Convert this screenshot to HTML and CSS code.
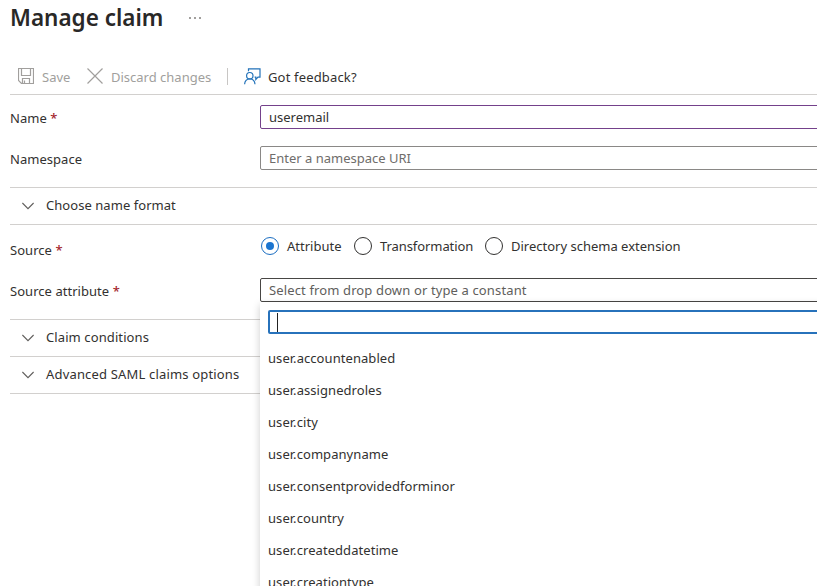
FILE: index.html
```html
<!DOCTYPE html>
<html lang="en">
<head>
<meta charset="utf-8">
<title>Manage claim</title>
<link rel="stylesheet" href="styles.css">
</head>
<body>
<main class="page">
  <header class="header">
    <h1 class="title">Manage claim</h1>
    <span class="more"><i></i><i></i><i></i></span>
  </header>
  <nav class="toolbar">
    <svg class="icon save" width="16" height="16" viewBox="0 0 16 16"><path d="M.5 .5h15v15h-12l-3-3zM3.500 .5v7h9v-7M4.500 15v-4.500h7V15M6.500 12.500V15"/></svg>
    <span class="command save-text">Save</span>
    <svg class="icon discard" width="18" height="18" viewBox="0 0 18 18"><path d="M1.500 1.500l15 15M16.500 1.500l-15 15"/></svg>
    <span class="command discard-text">Discard changes</span>
    <span class="separator"></span>
    <svg class="icon feedback" width="17" height="17" viewBox="0 0 17 17"><path d="M4.500 3.200V.8h11.500v8.400h-2l-2.200 2.300V9.200h-1.200"/><circle cx="5.800" cy="7.700" r="3.200"/><path d="M.6 16.300c.2-3.300 2.200-5.300 5.200-5.300s5 2 5.200 5.300"/></svg>
    <span class="feedback-text">Got feedback?</span>
  </nav>

  <div class="row row-name">
    <label class="label">Name <b>*</b></label>
    <div class="input active">useremail</div>
  </div>
  <div class="row row-namespace">
    <label class="label">Namespace</label>
    <div class="input hint">Enter a namespace URI</div>
  </div>

  <section class="accordion">
    <div class="fold"><svg class="chevron" width="12" height="8" viewBox="0 0 12 8"><path d="M.4 1l5.600 5.600L11.600 1"/></svg><span class="fold-text">Choose name format</span></div>
  </section>

  <div class="row row-source">
    <label class="label">Source <b>*</b></label>
    <div class="radios">
      <span class="radio selected"></span><span class="radio-text attribute">Attribute</span>
      <span class="radio"></span><span class="radio-text transformation">Transformation</span>
      <span class="radio"></span><span class="radio-text">Directory schema extension</span>
    </div>
  </div>
  <div class="row row-attribute">
    <label class="label">Source attribute <b>*</b></label>
    <div class="input select"><span class="select-text">Select from drop down or type a constant</span>
      <div class="menu">
        <div class="search"><span class="caret"></span></div>
        <ul class="options">
          <li>user.accountenabled</li>
          <li>user.assignedroles</li>
          <li>user.city</li>
          <li>user.companyname</li>
          <li>user.consentprovidedforminor</li>
          <li>user.country</li>
          <li>user.createddatetime</li>
          <li>user.creationtype</li>
        </ul>
      </div>
    </div>
  </div>

  <section class="accordion">
    <div class="fold"><svg class="chevron" width="12" height="8" viewBox="0 0 12 8"><path d="M.4 1l5.600 5.600L11.600 1"/></svg><span class="fold-text conditions">Claim conditions</span></div>
    <div class="fold"><svg class="chevron" width="12" height="8" viewBox="0 0 12 8"><path d="M.4 1l5.600 5.600L11.600 1"/></svg><span class="fold-text saml">Advanced SAML claims options</span></div>
  </section>
</main>
</body>
</html>
```
FILE: styles.css
```css
* { box-sizing: border-box; }
body {
  margin: 0;
  background: #fff;
  color: #323130;
  font: 13px/20px "Noto Sans", "Open Sans", sans-serif;
}
.page { height: 586px; padding-left: 10px; overflow: hidden; white-space: nowrap; }
.header { display: flex; height: 58px; }
.title { width: 179px; margin: 2px 0 0; font-size: 22.500px; line-height: 32px; font-weight: 600; color: #292827; }
.more { display: flex; gap: 3px; padding-top: 17px; }
.more i { width: 2px; height: 2px; background: #a19f9d; }

.toolbar { display: flex; align-items: center; height: 37px; border-bottom: 1px solid #d2d0ce; }
.icon { flex: none; fill: none; stroke: #a19f9d; stroke-width: 1.200; }
.save { margin-left: 8px; }
.command { padding-top: 2px; color: #a19f9d; }
.save-text { width: 44px; margin-left: 8px; }
.discard { margin-left: 0; }
.discard-text { width: 116px; margin-left: 7px; }
.separator { width: 1px; height: 17px; margin-right: 16px; background: #c8c6c4; }
.feedback { stroke: #2272b9; }
.feedback-text { margin-left: 7px; padding-top: 2px; letter-spacing: .16px; }

.row { display: flex; height: 24px; }
.row-name { margin-top: 10px; }
.row-namespace { margin-top: 17px; }
.row-source { margin-top: 9px; }
.row-source .label { padding-top: 6px; }
.row-attribute { margin-top: 20px; }
.label { flex: none; width: 250px; padding-top: 3px; letter-spacing: .04px; }
.label b { color: #a4262c; font-weight: 500; }
.input {
  position: relative;
  width: 580px;
  flex: none;
  padding: 1px 8px;
  border: 1px solid #8a8886;
  border-radius: 2px;
}
.active { border-color: #74418b; }
.hint { color: #6f6d6b; }
.select { border-color: #484644; color: #605e5c; }
.select-text { letter-spacing: .13px; }

.accordion { margin-top: 17px; border-bottom: 1px solid #d2d0ce; }
.fold { display: flex; align-items: center; height: 37px; padding-left: 12px; gap: 12px; border-top: 1px solid #d2d0ce; }
.fold-text { padding-bottom: 2px; letter-spacing: .05px; }
.conditions { letter-spacing: .1px; }
.saml { letter-spacing: .17px; }
.chevron { fill: none; stroke: #605e5c; stroke-width: 1.100; margin-bottom: 1px; }

.radios { display: flex; align-items: center; }
.radio { width: 18px; height: 18px; margin-left: 1px; border: 1px solid #323130; border-radius: 50%; }
.selected { border-color: #1b6ec2; padding: 4px; }
.selected::before { content: ""; display: block; width: 8px; height: 8px; border-radius: 50%; background: #1b75d0; }
.radio-text { margin-left: 8px; }
.attribute { width: 66px; }
.transformation { width: 104px; letter-spacing: -.08px; }

.menu {
  position: absolute;
  top: 23px;
  left: -1px;
  width: 580px;
  height: 320px;
  padding: 8px;
  background: #fff;
  color: #323130;
  box-shadow: 0 3px 8px rgba(0, 0, 0, .2);
}
.search { width: 600px; height: 24px; padding: 2px 7px; border: 2px solid #2772bb; border-radius: 2px; }
.caret { display: block; width: 1px; height: 19px; margin-top: -1px; background: #222; }
.options { margin: 8px 0 0; padding: 0; list-style: none; letter-spacing: .06px; }
.options li { height: 32px; line-height: 32px; }
```
